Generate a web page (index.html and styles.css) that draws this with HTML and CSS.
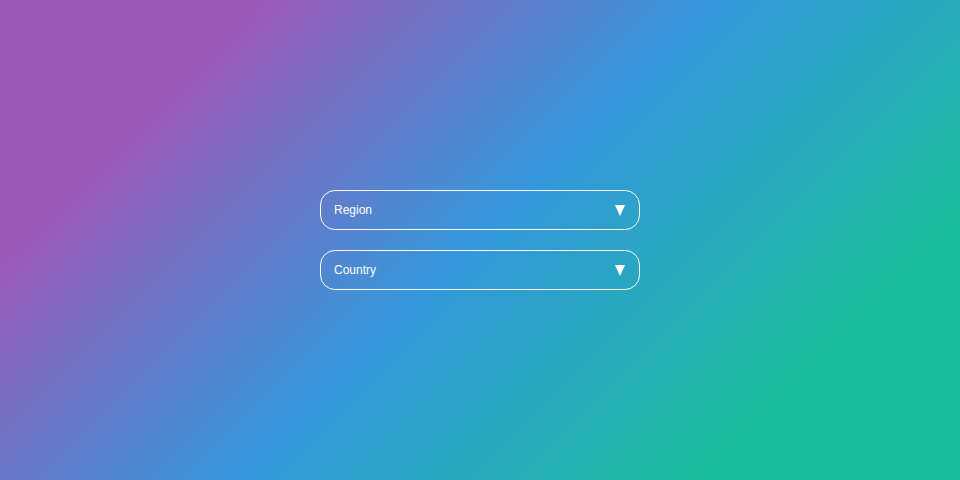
FILE: index.html
```html
<!DOCTYPE html>
<html lang="en">
<head>
<meta charset="utf-8">
<title>Select</title>
<link rel="stylesheet" href="styles.css">
</head>
<body>
<main class="page">
  <div class="selects">
    <div class="select">
      <span class="select-label">Region</span>
      <svg class="select-arrow" width="10" height="11" viewBox="0 0 10 11"><polygon points="0,0 10,0 5,11" fill="#fff"/></svg>
    </div>
    <div class="select">
      <span class="select-label">Country</span>
      <svg class="select-arrow" width="10" height="11" viewBox="0 0 10 11"><polygon points="0,0 10,0 5,11" fill="#fff"/></svg>
    </div>
  </div>
</main>
</body>
</html>
```

FILE: styles.css
```css
html, body {
  margin: 0;
  padding: 0;
}
body {
  font-family: "Liberation Sans", Arial, sans-serif;
  color: #fff;
}
.page {
  width: 960px;
  height: 480px;
  background: linear-gradient(135deg, #9b59b6 18%, #3498db 50%, #1abc9c 82%);
  display: flex;
  align-items: center;
  justify-content: center;
}
.selects {
  display: flex;
  flex-direction: column;
  gap: 20px;
}
.select {
  box-sizing: border-box;
  width: 320px;
  height: 40px;
  border: 1px solid #fff;
  border-radius: 15px;
  padding: 0 14px 0 13px;
  display: flex;
  align-items: center;
  justify-content: space-between;
}
.select-label {
  font-size: 12px;
  line-height: 14px;
}
.select-arrow {
  display: block;
}
```
